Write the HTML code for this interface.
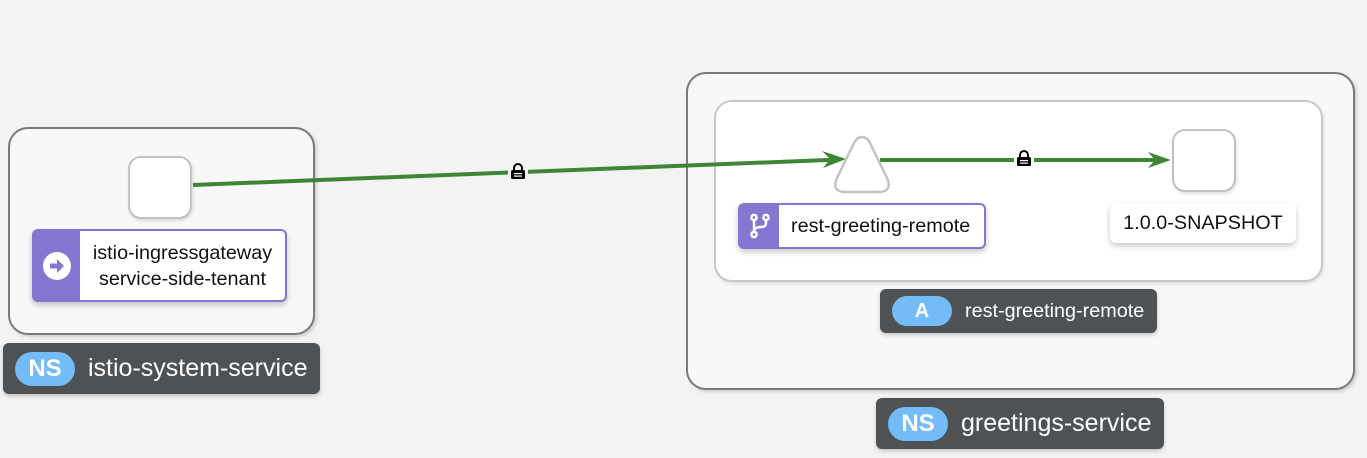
<!DOCTYPE html>
<html><head><meta charset="utf-8"><style>
*{margin:0;padding:0;box-sizing:border-box}
body{width:1367px;height:458px;background:#f3f3f3;position:relative;overflow:hidden;font-family:"Liberation Sans",sans-serif}
.a{position:absolute}
.grp{border:2px solid #7a7a7a;border-radius:20px;background:#f8f8f8;box-shadow:2px 2px 3px rgba(0,0,0,.15)}
.node{border:2px solid #c2c2c2;border-radius:13px;background:#fff;box-shadow:1px 2px 3px rgba(0,0,0,.12)}
.lbl{background:#fff;border-radius:6px;box-shadow:0 3px 6px rgba(0,0,0,.22);color:#111;display:flex;align-items:center}
.plbl{border:2px solid #8476d1}
.ic{background:#8476d1;height:100%;display:flex;align-items:center;justify-content:center}
.ns{background:#4f5255;border-radius:6px;color:#fff;display:flex;align-items:center;box-shadow:0 2px 4px rgba(0,0,0,.2)}
.pill{background:#73bcf7;border-radius:17px;color:#fff;display:flex;align-items:center;justify-content:center;font-weight:bold}
</style></head><body>
<div class="a grp" style="left:8px;top:127px;width:307px;height:208px"></div>
<div class="a grp" style="left:686px;top:72px;width:669px;height:318px"></div>
<div class="a" style="left:714px;top:100px;width:609px;height:182px;border:2px solid #c8c8c8;border-radius:18px;background:#fff;box-shadow:1px 2px 3px rgba(0,0,0,.1)"></div>

<svg class="a" style="left:0;top:0" width="1367" height="458">
<line x1="193" y1="185" x2="840" y2="159.5" stroke="#3e8635" stroke-width="4"/>
<path d="M822 151 L846 159 L823 168 L830 159 Z" fill="#3e8635"/>
<line x1="880" y1="160" x2="1165" y2="160" stroke="#3e8635" stroke-width="4"/>
<path d="M1148 152 L1171 160 L1148 168 L1155 160 Z" fill="#3e8635"/>
<path d="M862 137 Q857 137 854 143 L837 178 Q831 192 846 192 L878 192 Q893 192 887 178 L870 143 Q867 137 862 137 Z" fill="#fff" stroke="#c2c2c2" stroke-width="2.5"/>
<rect x="508" y="162" width="20" height="18" fill="#f3f3f3"/>
<g transform="translate(511,164)"><path d="M3 6 V4 A4 4 0 0 1 11 4 V6" fill="none" stroke="#000" stroke-width="2"/><rect x="0" y="6" width="14" height="9" rx="1.5" fill="#000"/><rect x="3" y="9" width="8" height="1.2" fill="#fff"/><rect x="3" y="11.5" width="8" height="1.2" fill="#fff"/></g>
<rect x="1014" y="150" width="20" height="18" fill="#fff"/>
<g transform="translate(1017,151)"><path d="M3 6 V4 A4 4 0 0 1 11 4 V6" fill="none" stroke="#000" stroke-width="2"/><rect x="0" y="6" width="14" height="9" rx="1.5" fill="#000"/><rect x="3" y="9" width="8" height="1.2" fill="#fff"/><rect x="3" y="11.5" width="8" height="1.2" fill="#fff"/></g>
</svg>

<div class="a node" style="left:128px;top:156px;width:64px;height:63px"></div>
<div class="a node" style="left:1172px;top:129px;width:64px;height:63px"></div>

<div class="a lbl plbl" style="left:32px;top:229px;width:255px;height:73px">
<div class="ic" style="width:46px"><svg width="30" height="30" viewBox="0 0 30 30"><circle cx="15" cy="15" r="14" fill="#fff"/><path d="M8 12.5 H15 V8 L22 15 L15 22 V17.5 H8 Z" fill="#8476d1"/></svg></div>
<div style="flex:1;text-align:center;font-size:19.8px;line-height:26px">istio-ingressgateway<br>service-side-tenant</div></div>

<div class="a lbl plbl" style="left:738px;top:203px;width:248px;height:46px">
<div class="ic" style="width:39px"><svg width="22" height="26" viewBox="0 0 22 26"><g fill="none" stroke="#fff" stroke-width="2.5"><circle cx="5" cy="4.5" r="2.6"/><circle cx="17" cy="4.5" r="2.6"/><circle cx="5" cy="21.5" r="2.6"/><path d="M5 7 V19 M17 7 V10 Q17 14 12 14 Q5 14 5 19"/></g></svg></div>
<div style="padding-left:12px;font-size:19.8px">rest-greeting-remote</div></div>

<div class="a lbl" style="left:1110px;top:203px;width:186px;height:40px;justify-content:center;font-size:19.8px">1.0.0-SNAPSHOT</div>

<div class="a ns" style="left:3px;top:343px;width:317px;height:51px">
<div class="pill" style="margin-left:12px;width:60px;height:34px;font-size:24px">NS</div>
<div style="margin-left:13px;font-size:25px">istio-system-service</div></div>

<div class="a ns" style="left:880px;top:289px;width:277px;height:44px">
<div class="pill" style="margin-left:12px;width:60px;height:30px;font-size:20px">A</div>
<div style="margin-left:13px;font-size:19.8px">rest-greeting-remote</div></div>

<div class="a ns" style="left:876px;top:398px;width:288px;height:51px">
<div class="pill" style="margin-left:12px;width:60px;height:34px;font-size:24px">NS</div>
<div style="margin-left:13px;font-size:25px">greetings-service</div></div>
</body></html>
